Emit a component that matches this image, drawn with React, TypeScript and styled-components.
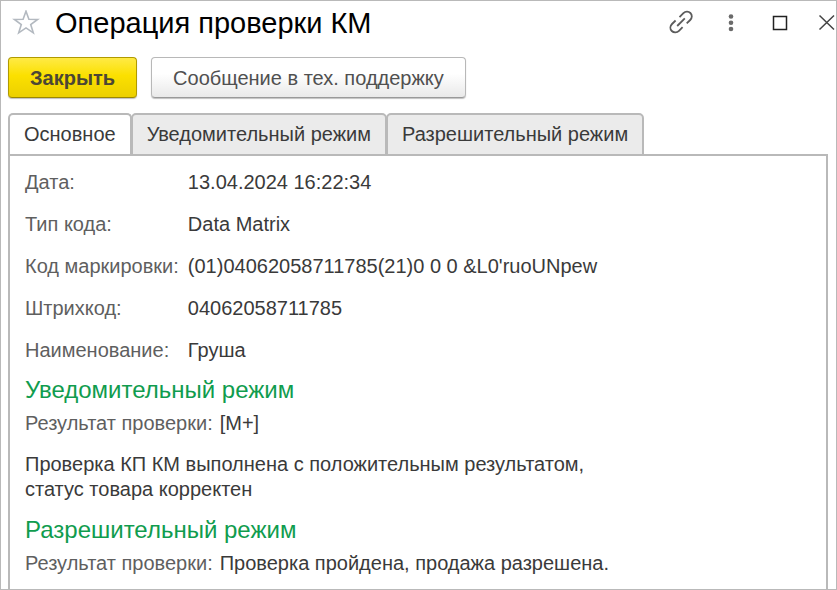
import React, { useState } from "react";
import styled, { createGlobalStyle } from "styled-components";

const GlobalStyle = createGlobalStyle`
  *, *::before, *::after { box-sizing: border-box; }
  body {
    margin: 0;
    background: #fff;
    color: #3a3a3a;
    font-family: "Liberation Sans", Arial, sans-serif;
    font-size: 20px;
    line-height: 24px;
  }
  button { font: inherit; color: inherit; margin: 0; cursor: pointer; }
`;

const Window = styled.main`
  display: flex;
  flex-direction: column;
  min-height: 100vh;
  border: 1px solid #b9b9b9;
`;

const TitleBar = styled.header`
  display: flex;
  align-items: center;
  height: 44px;
  padding-left: 11px;
`;

const Title = styled.h1`
  flex: 1;
  margin: 0 0 0 15px;
  font-size: 29px;
  line-height: 32px;
  font-weight: 400;
  color: #000;
  white-space: nowrap;
`;

const IconButton = styled.button`
  display: flex;
  padding: 0;
  border: 0;
  background: none;
`;

const WindowControls = styled.div`
  display: flex;
  align-items: center;
  gap: 26px;
`;

const Toolbar = styled.div`
  display: flex;
  gap: 14px;
  padding: 12px 7px 15px;
`;

const CommandButton = styled.button<{ $primary?: boolean }>`
  height: 41px;
  padding: 0 21px;
  border: 1px solid ${(p) => (p.$primary ? "#b09a00" : "#b8b8b8")};
  border-bottom-color: ${(p) => (p.$primary ? "#9c8800" : "#999")};
  border-radius: 4px;
  background: ${(p) =>
    p.$primary
      ? "linear-gradient(#ffea45, #fbe000 45%, #ecd000)"
      : "linear-gradient(#fff 40%, #e9e9e9)"};
  box-shadow: 0 1px 1px rgba(0, 0, 0, 0.25);
  font-weight: ${(p) => (p.$primary ? 700 : 400)};
  color: ${(p) => (p.$primary ? "#4b4735" : "#505050")};
  white-space: nowrap;
`;

const TabList = styled.div`
  display: flex;
  padding: 0 7px;
`;

const Tab = styled.button<{ $active: boolean }>`
  height: 43px;
  margin-bottom: -2px;
  padding: 0 14px 2px;
  border: 2px solid #b9b9b9;
  border-bottom-color: ${(p) => (p.$active ? "#fff" : "#b9b9b9")};
  border-radius: 5px 5px 0 0;
  background: ${(p) => (p.$active ? "#fff" : "#ebebeb")};
  white-space: nowrap;
  & + & { margin-left: -1px; }
`;

const Panel = styled.section`
  flex: 1;
  margin: 0 8px 0 7px;
  padding: 14px 15px 8px;
  border: 2px solid #b9b9b9;
  border-bottom: 0;
`;

const Details = styled.dl`
  display: grid;
  grid-template-columns: max-content 1fr;
  gap: 18px 9px;
  margin: 0;
`;

const Label = styled.dt`
  color: #5f5f5f;
`;

const Value = styled.dd`
  margin: 0;
`;

const SectionTitle = styled.h2`
  margin: 12px 0 5px;
  font-size: 24px;
  line-height: 32px;
  font-weight: 400;
  color: #109c4e;
`;

const Result = styled.dl`
  display: flex;
  gap: 7px;
  margin: 0;
`;

const Note = styled.p`
  max-width: 600px;
  margin: 17px 0 0;
  line-height: 25px;
`;

const StarIcon = () => (
  <svg width="28" height="26" viewBox="0 1 28 26" fill="none" stroke="#b3b9c0" strokeWidth="1.6">
    <path d="M14 2.2 16.9 10.2 25.6 10.4 18.7 15.5 21.3 23.8 14 18.9 6.7 23.8 9.3 15.5 2.4 10.4 11.1 10.2Z" />
  </svg>
);

const LinkIcon = () => (
  <svg width="26" height="26" viewBox="0 1 26 26" fill="none" stroke="#5c5c5c" strokeWidth="1.8">
    <path d="M11.5 8.2 15.4 4.2C17.4 2.2 20.4 2 22.4 4S24.2 9 22.2 11L18.7 14.4" />
    <path d="M14.6 18.2 11 21.8C9 23.8 5.8 24 3.8 22S2 17 4 15L7.6 11.5" />
    <path d="M9.2 17 16.8 9.4" />
  </svg>
);

const MoreIcon = () => (
  <svg width="22" height="22" viewBox="0 0 22 22" fill="#6a6a6a">
    <circle cx="11" cy="4.5" r="2.3" />
    <circle cx="11" cy="10.7" r="2.3" />
    <circle cx="11" cy="17" r="2.3" />
  </svg>
);

const MaximizeIcon = () => (
  <svg width="24" height="24" viewBox="0 0 24 24" fill="none" stroke="#222" strokeWidth="1.5">
    <rect x="5.5" y="5.5" width="13" height="13" />
  </svg>
);

const CloseIcon = () => (
  <svg width="18" height="24" viewBox="0 0 18 24" fill="none" stroke="#444" strokeWidth="1.5">
    <path d="M1.5 4.5 16 18.5M16 4.5 1.5 18.5" />
  </svg>
);

const tabs = ["Основное", "Уведомительный режим", "Разрешительный режим"];

const details = [
  ["Дата:", "13.04.2024 16:22:34"],
  ["Тип кода:", "Data Matrix"],
  ["Код маркировки:", "(01)04062058711785(21)0 0 0 &L0'ruoUNpew"],
  ["Штрихкод:", "04062058711785"],
  ["Наименование:", "Груша"],
];

export default function App() {
  const [active, setActive] = useState(0);
  return (
    <>
      <GlobalStyle />
      <Window>
        <TitleBar>
          <IconButton aria-label="Добавить в избранное"><StarIcon /></IconButton>
          <Title>Операция проверки КМ</Title>
          <WindowControls>
            <IconButton aria-label="Получить ссылку"><LinkIcon /></IconButton>
            <IconButton aria-label="Ещё"><MoreIcon /></IconButton>
            <IconButton aria-label="Развернуть"><MaximizeIcon /></IconButton>
            <IconButton aria-label="Закрыть окно"><CloseIcon /></IconButton>
          </WindowControls>
        </TitleBar>
        <Toolbar>
          <CommandButton $primary>Закрыть</CommandButton>
          <CommandButton>Сообщение в тех. поддержку</CommandButton>
        </Toolbar>
        <TabList role="tablist">
          {tabs.map((name, i) => (
            <Tab
              key={name}
              id={`tab-${i}`}
              role="tab"
              aria-selected={i === active}
              aria-controls="panel"
              $active={i === active}
              onClick={() => setActive(i)}
            >
              {name}
            </Tab>
          ))}
        </TabList>
        <Panel id="panel" role="tabpanel" aria-labelledby={`tab-${active}`}>
          <Details>
            {details.map(([label, value]) => (
              <React.Fragment key={label}>
                <Label>{label}</Label>
                <Value>{value}</Value>
              </React.Fragment>
            ))}
          </Details>
          <SectionTitle>Уведомительный режим</SectionTitle>
          <Result>
            <Label>Результат проверки:</Label>
            <Value>[M+]</Value>
          </Result>
          <Note>Проверка КП КМ выполнена с положительным результатом, статус товара корректен</Note>
          <SectionTitle>Разрешительный режим</SectionTitle>
          <Result>
            <Label>Результат проверки:</Label>
            <Value>Проверка пройдена, продажа разрешена.</Value>
          </Result>
        </Panel>
      </Window>
    </>
  );
}
